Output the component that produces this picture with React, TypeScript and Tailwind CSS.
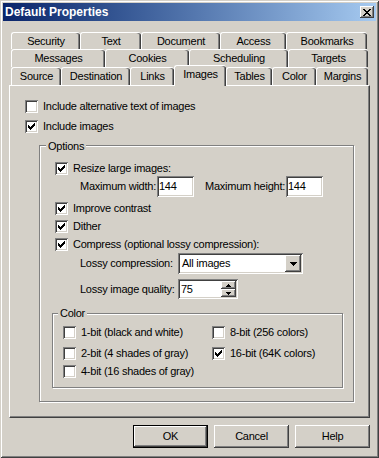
import React from "react";

// Win2000-style "Default Properties" dialog, Images tab

const RAISED =
  "shadow-[inset_-1px_-1px_0_#404040,inset_1px_1px_0_#fff,inset_-2px_-2px_0_#808080,inset_2px_2px_0_#d4d0c8]";
const SUNKEN =
  "shadow-[inset_1px_1px_0_#808080,inset_-1px_-1px_0_#fff,inset_2px_2px_0_#404040,inset_-2px_-2px_0_#d4d0c8]";
const ETCHED = "border border-[#808080] shadow-[inset_1px_1px_0_#fff,1px_1px_0_#fff]";

function CheckMark() {
  return (
    <svg width="7" height="7" viewBox="0 0 7 7" shapeRendering="crispEdges" className="block">
      <path
        fill="#000"
        d="M0 2h1v3H0zM1 3h1v3H1zM2 4h1v3H2zM3 3h1v3H3zM4 2h1v3H4zM5 1h1v3H5zM6 0h1v3H6z"
      />
    </svg>
  );
}

function CloseGlyph() {
  return (
    <svg width="8" height="7" viewBox="0 0 8 7" shapeRendering="crispEdges" className="block">
      <path
        fill="#000"
        d="M0 0h2v1H0zM6 0h2v1H6zM1 1h2v1H1zM5 1h2v1H5zM2 2h4v1H2zM3 3h2v1H3zM2 4h4v1H2zM1 5h2v1H1zM5 5h2v1H5zM0 6h2v1H0zM6 6h2v1H6z"
      />
    </svg>
  );
}

function DownArrow() {
  return (
    <svg width="7" height="4" viewBox="0 0 7 4" shapeRendering="crispEdges" className="block">
      <path fill="#000" d="M0 0h7v1H0zM1 1h5v1H1zM2 2h3v1H2zM3 3h1v1H3z" />
    </svg>
  );
}

function SpinArrow({ up }: { up?: boolean }) {
  return (
    <svg width="5" height="3" viewBox="0 0 5 3" shapeRendering="crispEdges" className="block">
      <path
        fill="#000"
        d={up ? "M2 0h1v1H2zM1 1h3v1H1zM0 2h5v1H0z" : "M0 0h5v1H0zM1 1h3v1H1zM2 2h1v1H2z"}
      />
    </svg>
  );
}

function Check({ label, checked, className = "" }: { label: string; checked?: boolean; className?: string }) {
  return (
    <div className={`flex items-center h-[13px] ${className}`}>
      <div className={`w-[13px] h-[13px] shrink-0 bg-white flex items-center justify-center ${SUNKEN}`}>
        {checked && <CheckMark />}
      </div>
      <span className="ml-[5px] leading-[13px] whitespace-nowrap">{label}</span>
    </div>
  );
}

function Field({ value, w }: { value: string; w: string }) {
  return (
    <div className={`${w} h-[21px] bg-white p-[2px] flex items-center ${SUNKEN}`}>
      <span className="leading-[13px]">{value}</span>
    </div>
  );
}

type TabDef = { label: string; w: string; selected?: boolean };

const rows: { h: string; tabs: TabDef[] }[] = [
  {
    h: "h-[17px]",
    tabs: [
      { label: "Security", w: "w-[69px]" },
      { label: "Text", w: "w-[61px]" },
      { label: "Document", w: "w-[79px]" },
      { label: "Access", w: "w-[66px]" },
      { label: "Bookmarks", w: "w-[81px]" },
    ],
  },
  {
    h: "h-[18px]",
    tabs: [
      { label: "Messages", w: "w-[94px]" },
      { label: "Cookies", w: "w-[84px]" },
      { label: "Scheduling", w: "w-[99px]" },
      { label: "Targets", w: "w-[80px]" },
    ],
  },
  {
    h: "h-[18px]",
    tabs: [
      { label: "Source", w: "w-[50px]" },
      { label: "Destination", w: "w-[69px]" },
      { label: "Links", w: "w-[44px]" },
      { label: "Images", w: "w-[52px]", selected: true },
      { label: "Tables", w: "w-[46px]" },
      { label: "Color", w: "w-[44px]" },
      { label: "Margins", w: "w-[52px]" },
    ],
  },
];

function Tab({ label, w, selected }: TabDef) {
  return (
    <div
      className={`${w} shrink-0 flex items-center justify-center rounded-t-[3px] border-t border-l border-white bg-[#d4d0c8] shadow-[inset_-1px_0_0_#404040,inset_-2px_0_0_#808080] ${
        selected ? "relative z-10 self-start -mt-[2px] h-[21px] pb-[3px]" : "h-full"
      }`}
    >
      <span className="leading-[13px] whitespace-nowrap">{label}</span>
    </div>
  );
}

export default function App() {
  return (
    <div className="font-['Liberation_Sans',Arial,sans-serif] text-[11px] tracking-[-0.25px] text-black w-[379px] h-[458px] bg-[#d4d0c8] p-[3px] select-none shadow-[inset_1px_1px_0_#d4d0c8,inset_-1px_-1px_0_#404040,inset_2px_2px_0_#fff,inset_-2px_-2px_0_#808080]">
      {/* title bar */}
      <div className="h-[18px] flex items-center justify-between pl-[2px] pr-[2px] bg-linear-to-r from-[#0a246a] to-[#a6caf0]">
        <span className="text-white font-bold text-[12px] tracking-normal leading-[14px]">Default Properties</span>
        <div className={`w-[14px] h-[12px] bg-[#d4d0c8] flex items-center justify-center ${RAISED}`}>
          <CloseGlyph />
        </div>
      </div>

      <div className="px-[6px] pt-[11px]">
        {/* tab rows */}
        <div className="pl-[2px]">
          {rows.map((r, i) => (
            <div key={i} className={`flex ${r.h}`}>
              {r.tabs.map((t) => (
                <Tab key={t.label} {...t} />
              ))}
            </div>
          ))}
        </div>

        {/* tab page */}
        <div className="h-[333px] border border-white border-r-[#404040] border-b-[#404040] shadow-[inset_-1px_-1px_0_#808080] pl-[15px] pt-[14px]">
          <Check label="Include alternative text of images" />
          <Check label="Include images" checked className="mt-[7px]" />

          <div className={`relative ml-[14px] mt-[12px] w-[315px] h-[257px] pl-[15px] pt-[16px] ${ETCHED}`}>
            <span className="absolute left-[6px] -top-[6px] px-[2px] bg-[#d4d0c8] leading-[13px]">Options</span>

            <Check label="Resize large images:" checked />
            <div className="mt-[1px] h-[21px] flex items-center pl-[25px]">
              <span className="w-[77px] whitespace-nowrap">Maximum width:</span>
              <Field value="144" w="w-[37px]" />
              <span className="ml-[11px] w-[81px] whitespace-nowrap">Maximum height:</span>
              <Field value="144" w="w-[37px]" />
            </div>
            <Check label="Improve contrast" checked className="mt-[5px]" />
            <Check label="Dither" checked className="mt-[5px]" />
            <Check label="Compress (optional lossy compression):" checked className="mt-[5px]" />

            <div className="mt-[2px] h-[21px] flex items-center pl-[25px]">
              <span className="w-[98px] whitespace-nowrap">Lossy compression:</span>
              <div className={`w-[125px] h-[21px] bg-white p-[2px] flex ${SUNKEN}`}>
                <span className="flex-1 pl-[2px] leading-[17px]">All images</span>
                <div className={`w-[16px] h-[17px] bg-[#d4d0c8] flex items-center justify-center ${RAISED}`}>
                  <DownArrow />
                </div>
              </div>
            </div>

            <div className="mt-[5px] h-[20px] flex items-center pl-[25px]">
              <span className="w-[98px] whitespace-nowrap">Lossy image quality:</span>
              <div className={`w-[60px] h-[20px] bg-white p-[2px] flex ${SUNKEN}`}>
                <span className="flex-1 pl-[1px] leading-[16px]">75</span>
                <div className="w-[15px] flex flex-col">
                  <div className={`h-[8px] bg-[#d4d0c8] flex items-center justify-center ${RAISED}`}>
                    <SpinArrow up />
                  </div>
                  <div className={`h-[8px] bg-[#d4d0c8] flex items-center justify-center ${RAISED}`}>
                    <SpinArrow />
                  </div>
                </div>
              </div>
            </div>

            <div className={`relative -ml-[3px] mt-[14px] w-[291px] h-[75px] pl-[10px] pt-[12px] ${ETCHED}`}>
              <span className="absolute left-[5px] -top-[7px] px-[2px] bg-[#d4d0c8] leading-[13px]">Color</span>
              <div className="flex">
                <Check label="1-bit (black and white)" className="w-[149px]" />
                <Check label="8-bit (256 colors)" />
              </div>
              <div className="flex mt-[8px]">
                <Check label="2-bit (4 shades of gray)" className="w-[149px]" />
                <Check label="16-bit (64K colors)" checked />
              </div>
              <Check label="4-bit (16 shades of gray)" className="mt-[5px]" />
            </div>
          </div>
        </div>

        {/* buttons */}
        <div className="mt-[7px] flex justify-end gap-[6px]">
          <button className="w-[75px] h-[23px] border border-black bg-[#d4d0c8] shadow-[inset_-1px_-1px_0_#404040,inset_1px_1px_0_#fff,inset_-2px_-2px_0_#808080]">
            OK
          </button>
          <button className={`w-[75px] h-[23px] bg-[#d4d0c8] ${RAISED}`}>Cancel</button>
          <button className={`w-[75px] h-[23px] bg-[#d4d0c8] ${RAISED}`}>Help</button>
        </div>
      </div>
    </div>
  );
}
